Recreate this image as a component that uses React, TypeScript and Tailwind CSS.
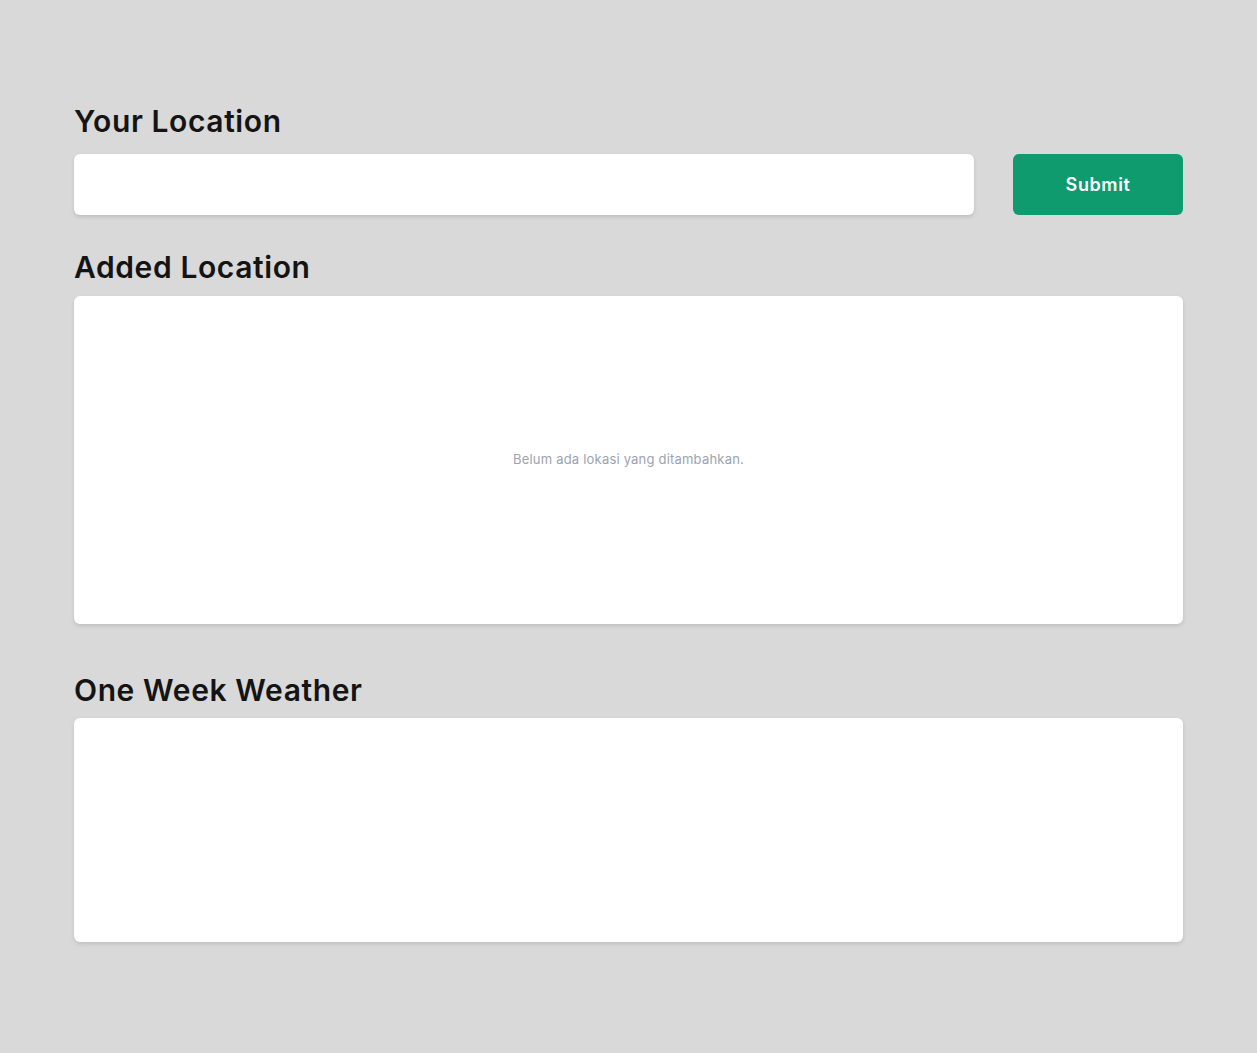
const heading = "text-[30px] leading-[38px] font-semibold text-[#141414] tracking-[0.6px]"
const card = "rounded-md bg-white shadow-[0_2px_4px_rgba(0,0,0,0.12)]"

export default function App() {
  return (
    <div className="min-h-[1053px] w-full bg-[#d9d9d9] px-[74px] pt-[102px] font-['Inter',sans-serif]">
      <h2 className={heading}>Your Location</h2>
      <div className="mt-[14px] flex gap-[39px]">
        <input
          type="text"
          className={`h-[61px] flex-1 px-4 text-base outline-none ${card}`}
        />
        <button className="h-[61px] w-[170px] rounded-md bg-[#0f9b6e] text-[18px] font-semibold tracking-[0.6px] text-white">
          Submit
        </button>
      </div>

      <h2 className={`mt-[33px] ${heading}`}>Added Location</h2>
      <div className={`mt-[10px] flex h-[328px] items-center justify-center ${card}`}>
        <p className="text-[13px] tracking-[0.2px] text-[#9ca3af]">
          Belum ada lokasi yang ditambahkan.
        </p>
      </div>

      <h2 className={`mt-[47px] ${heading}`}>One Week Weather</h2>
      <div className={`mt-[9px] h-[224px] ${card}`} />
    </div>
  )
}
